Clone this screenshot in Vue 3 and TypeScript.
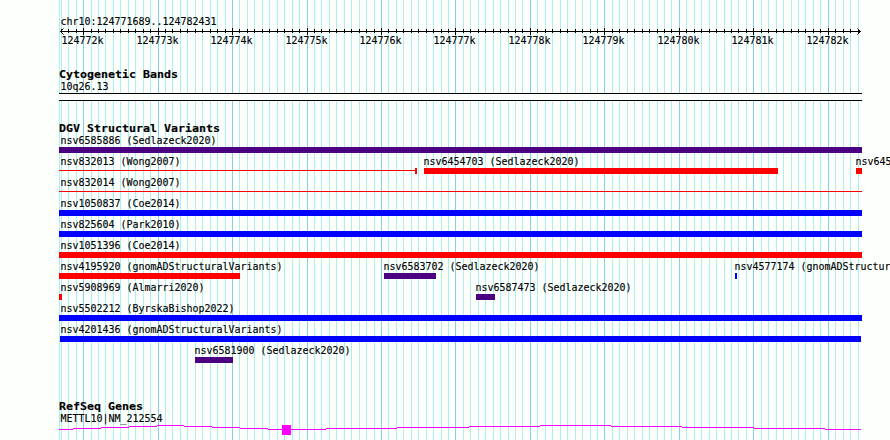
<script setup lang="ts">
interface Feature {
  name: string
  start: number
  end: number
  color: string
  shape?: 'bar' | 'line' | 'capped'
}

const WIDTH = 890
const HEIGHT = 440
const LEFT = 59
const RIGHT = 862
const STEP = 7.4474
const ORIGIN = 83.09

const RED = '#ff0000'
const BLUE = '#0000ff'
const INDIGO = '#4b0082'

const ticks = Array.from({ length: 108 }, (_, i) => {
  const index = i - 3
  return { x: Math.round(ORIGIN + index * STEP), major: index % 10 === 0, index }
}).filter((t) => t.x < RIGHT)

const majorTicks = ticks
  .filter((t) => t.major)
  .map((t) => ({ x: t.x, label: `${124772 + t.index / 10}k` }))

const lanes: Feature[][] = [
  [{ name: 'nsv6585886 (Sedlazeck2020)', start: LEFT, end: RIGHT, color: INDIGO }],
  [
    { name: 'nsv832013 (Wong2007)', start: LEFT, end: 417, color: RED, shape: 'capped' },
    { name: 'nsv6454703 (Sedlazeck2020)', start: 424, end: 778, color: RED },
    { name: 'nsv6454704 (Sedlazeck2020)', start: 856, end: RIGHT, color: RED },
  ],
  [{ name: 'nsv832014 (Wong2007)', start: LEFT, end: RIGHT, color: RED, shape: 'line' }],
  [{ name: 'nsv1050837 (Coe2014)', start: LEFT, end: RIGHT, color: BLUE }],
  [{ name: 'nsv825604 (Park2010)', start: LEFT, end: RIGHT, color: BLUE }],
  [{ name: 'nsv1051396 (Coe2014)', start: LEFT, end: RIGHT, color: RED }],
  [
    { name: 'nsv4195920 (gnomADStructuralVariants)', start: LEFT, end: 240, color: RED },
    { name: 'nsv6583702 (Sedlazeck2020)', start: 384, end: 436, color: INDIGO },
    { name: 'nsv4577174 (gnomADStructuralVariants)', start: 735, end: 737, color: BLUE },
  ],
  [
    { name: 'nsv5908969 (Almarri2020)', start: LEFT, end: 62, color: RED },
    { name: 'nsv6587473 (Sedlazeck2020)', start: 476, end: 495, color: INDIGO },
  ],
  [{ name: 'nsv5502212 (ByrskaBishop2022)', start: LEFT, end: RIGHT, color: BLUE }],
  [{ name: 'nsv4201436 (gnomADStructuralVariants)', start: 60, end: 861, color: BLUE }],
  [{ name: 'nsv6581900 (Sedlazeck2020)', start: 195, end: 233, color: INDIGO }],
]

const labelX = (f: Feature) => Math.max(60, f.start - 1) + 0.4

// Intron line segments of the gene model: [from, to, y]
const introns: [number, number, number][] = [
  [59, 73, 29], [73, 101, 28], [101, 129, 27], [129, 157, 26], [157, 184, 25],
  [184, 212, 26], [212, 240, 27], [240, 268, 28], [268, 282, 29],
  [291, 326, 29], [326, 397, 28], [397, 469, 27], [469, 540, 26], [540, 611, 25],
  [611, 682, 26], [682, 754, 27], [754, 825, 28], [825, 861, 29],
]
</script>

<template>
  <main class="browser">
    <svg class="grid" :width="WIDTH" :height="HEIGHT" shape-rendering="crispEdges">
      <rect :x="LEFT" y="0" width="1" :height="HEIGHT" class="minor" />
      <rect
        v-for="t in ticks"
        :key="t.index"
        :x="t.x"
        y="0"
        width="1"
        :height="HEIGHT"
        :class="t.major ? 'major' : 'minor'"
      />
    </svg>

    <svg class="track ruler" :width="WIDTH" height="66">
      <text x="60.4" y="25" :textLength="156" lengthAdjust="spacingAndGlyphs">chr10:124771689..124782431</text>
      <g shape-rendering="crispEdges">
        <rect x="60" y="31" width="801" height="1" />
        <rect
          v-for="t in ticks"
          :key="t.index"
          :x="t.x"
          :y="t.major ? 28 : 29"
          width="1"
          :height="t.major ? 7 : 4"
        />
      </g>
      <path d="M63.5 28.5L60.5 31.5L63.5 34.5M857.5 28.5L860.5 31.5L857.5 34.5" class="arrow" />
      <text
        v-for="t in majorTicks"
        :key="t.label"
        :x="t.x - 21.5"
        y="44"
        textLength="42"
        lengthAdjust="spacingAndGlyphs"
      >{{ t.label }}</text>
    </svg>

    <section class="track bands">
      <svg :width="WIDTH" height="54">
        <text class="heading" x="59" y="12" textLength="119" lengthAdjust="spacingAndGlyphs">Cytogenetic Bands</text>
        <text x="60.4" y="24" textLength="48" lengthAdjust="spacingAndGlyphs">10q26.13</text>
        <g shape-rendering="crispEdges">
          <rect :x="LEFT" y="27" :width="RIGHT - LEFT" height="8" />
          <rect :x="LEFT" y="28" :width="RIGHT - LEFT" height="6" class="band" />
        </g>
      </svg>
    </section>

    <section class="track variants">
      <svg :width="WIDTH" height="15">
        <text class="heading" x="59" y="12" textLength="161" lengthAdjust="spacingAndGlyphs">DGV Structural Variants</text>
      </svg>
      <svg v-for="(lane, i) in lanes" :key="i" class="lane" :width="WIDTH" height="21">
        <g v-for="f in lane" :key="f.name">
          <text :x="labelX(f)" y="9" :textLength="f.name.length * 6" lengthAdjust="spacingAndGlyphs">{{ f.name }}</text>
          <g :fill="f.color" shape-rendering="crispEdges">
            <rect v-if="f.shape" :x="f.start" y="14" :width="f.end - f.start" height="1" />
            <rect v-else :x="f.start" y="12" :width="f.end - f.start" height="6" />
            <rect v-if="f.shape === 'capped'" :x="f.end - 2" y="12" width="2" height="6" />
          </g>
        </g>
      </svg>
    </section>

    <section class="track genes">
      <svg :width="WIDTH" height="40">
        <text class="heading" x="59" y="10" textLength="84" lengthAdjust="spacingAndGlyphs">RefSeq Genes</text>
        <text x="60.4" y="22" textLength="102" lengthAdjust="spacingAndGlyphs">METTL10|NM_212554</text>
        <g class="gene" shape-rendering="crispEdges">
          <rect v-for="[from, to, y] in introns" :key="from" :x="from" :y="y" :width="to - from" height="1" />
          <rect x="282" y="25" width="9" height="10" />
        </g>
      </svg>
    </section>
  </main>
</template>

<style>
body {
  margin: 0;
  overflow: hidden;
}
</style>

<style scoped>
.browser {
  position: relative;
  display: flex;
  flex-direction: column;
  width: 890px;
  height: 440px;
  overflow: hidden;
  background: #fdfffc;
}
.grid {
  position: absolute;
  inset: 0;
}
.minor {
  fill: #afeeee;
}
.major {
  fill: #87ceeb;
}
.track {
  position: relative;
  flex: none;
}
svg {
  display: block;
}
.variants {
  padding-bottom: 34px;
}
text {
  font-family: "DejaVu Sans Mono", monospace;
  font-size: 11px;
  fill: #000;
  stroke: #000;
  stroke-width: 0.15px;
  white-space: pre;
}
.heading {
  font-weight: bold;
}
.arrow {
  fill: none;
  stroke: #000;
  stroke-width: 1;
}
.band {
  fill: #fdfffc;
}
.gene {
  fill: #ff00ff;
}
</style>
